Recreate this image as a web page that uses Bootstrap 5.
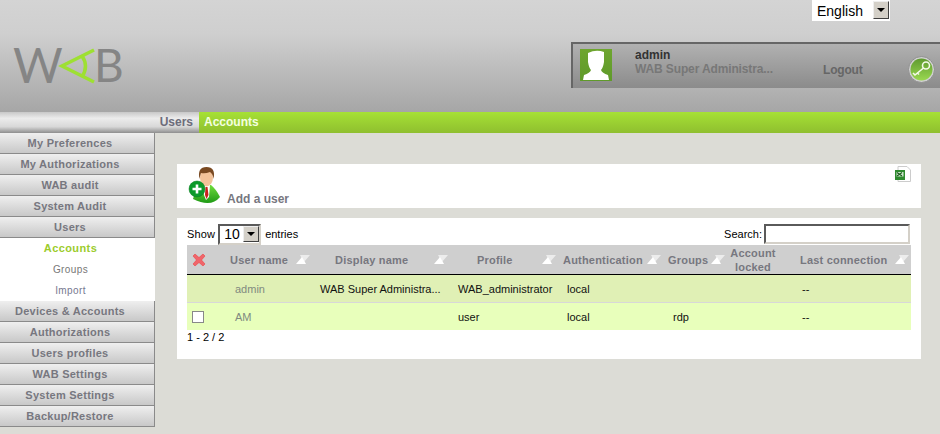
<!DOCTYPE html>
<html lang="en">
<head>
<meta charset="utf-8">
<title>WAB - Accounts</title>
<link href="https://cdn.jsdelivr.net/npm/bootstrap@5.3.0/dist/css/bootstrap.min.css" rel="stylesheet">
<style>
html,body{height:434px;overflow:hidden}
body{background:#dcdcd6;font-family:"Liberation Sans",Arial,sans-serif;font-size:11px;line-height:13px;color:#000}
.wab-head{height:112px;background:linear-gradient(#d4d4d4 0,#cfcfcf 30%,#a6a6a6 100%)}
.wab-lang{right:50px;top:0;width:78px;height:21px;border:1px solid #fff;border-top:0;background:#fff;padding:1px 0 0 1px}
.wab-lang select{appearance:none;border:0;background:#fff;font:14px/18px "Liberation Sans",sans-serif;padding:1px 0 0 3px;width:60px;height:19px;color:#000}
.wab-arrow{width:16px;height:16px;background:#d4d0c8;border:1px solid;border-color:#eee #404040 #404040 #eee;flex:none}
.wab-lang .wab-arrow{height:18px}
.wab-logo{left:14px;top:40px;height:50px;width:112px}
.wab-letter{font-family:"Lato",sans-serif;font-weight:400;font-size:48px;line-height:50px;color:#858585;top:0}
.wab-letter-w{left:-1px}
.wab-letter-b{left:80px;font-size:46px}
.wab-user{left:571px;top:42px;right:0;height:46px;border-top:2px solid #666;border-left:2px solid #666;background:linear-gradient(#b1b1b1,#8b8b8b);font-size:12px;font-weight:700}
.wab-name{left:62px;top:5px;color:#333}
.wab-role{left:62px;top:19px;color:#777;letter-spacing:-.13px}
.wab-logout{left:250px;top:20px;color:#666;letter-spacing:-.2px}
.wab-avatar{left:7px;top:5px}
.wab-key{left:335px;top:12px}
.wab-crumb{height:21px;font-size:12px;font-weight:700;line-height:20px}
.wab-crumb-a{width:199px;background:linear-gradient(#c8c8c8 0,#ececec 30%,#d8d8d8 70%,#8e8e8e 100%);color:#6c6c7a;padding-right:6px}
.wab-crumb-b{background:linear-gradient(#a6e135,#8fbf2f);color:#f4ffe0;padding-left:5px}
.wab-side{width:155px;flex:none}
.wab-side a{display:block;height:21px;line-height:20px;padding-right:14px;text-align:center;text-decoration:none;font-size:11px;font-weight:700;letter-spacing:.25px;color:#77777f;background:linear-gradient(#efefef,#c8c8c8);border-right:1px solid #8a8a8a;border-bottom:1px solid #8a8a8a}
.wab-side a.wab-sub{background:#fff;border:0;font-size:10px;font-weight:400;letter-spacing:.4px;line-height:22px;color:#777}
.wab-side a.wab-cur{color:#9ccc2c;font-weight:700;font-size:11px;line-height:20px;letter-spacing:.4px}
.wab-side a.wab-imp{color:#77778f}
.wab-main{padding:31px 19px 0 22px}
.wab-panel{background:#fff}
.wab-add{height:44px;margin-bottom:10px}
.wab-addicon{left:11px;top:3px}
.wab-addlabel{left:50px;top:29px;font-size:12px;font-weight:700;color:#777780}
.wab-xls{right:10px;top:2px}
.wab-list{height:141px;padding:5px 10px 0}
.wab-tools{height:22px;align-items:center}
.wab-inset{border:2px solid;border-color:#5a5a5a #d4d0c8 #d4d0c8 #5a5a5a;background:#fff}
.wab-size{width:43px;height:21px;margin:0 4px 0 3px;font-size:14px;padding:0 0 0 4px;line-height:16px}
.wab-size .wab-arrow{margin-left:auto}
.wab-search{width:146px;height:20px;margin:0 1px 0 2px;border-radius:0;padding:0}
.wab-show{letter-spacing:.15px}
.wab-grid{width:724px;table-layout:fixed;margin:0;border-collapse:separate;border-spacing:0;font-size:11px}
.wab-grid th{height:30px;background:#cfcfcf;border-bottom:1px solid #000;padding:0;font-weight:700;letter-spacing:.2px;color:#77777f;text-align:center;line-height:14px;vertical-align:middle;white-space:nowrap;position:relative}
.wab-grid td{padding:2px 0 0;vertical-align:middle;color:#111;border:0;white-space:nowrap}
.wab-r1 td{height:28px;background:#e0f0b5;border-bottom:1px solid #d8d8d8}
.wab-r2 td{height:27px;background:#e8ffbb}
.wab-grid .wab-login{color:#808a80;padding-left:13px}
.wab-grid td.wab-nopad{padding:0}
.wab-sort{position:absolute;right:2px;top:10px}
.wab-grid td.wab-pad{padding-left:8px}
.wab-grid td.wab-pad2{padding-left:9px}
.wab-grid td.wab-pad3{padding-left:10px}
.wab-check{display:block;width:12px;height:12px;margin-left:5px;background:#fff;border:1px solid;border-color:#404040 #fff #fff #404040;outline:1px solid #888;outline-offset:-1px}
.wab-count{line-height:14px}
</style>
</head>
<body>
<svg width="0" height="0" class="position-absolute"><defs>
<symbol id="wab-s" viewBox="0 0 14 9"><path d="M4 0H14L8 7Z" fill="#ececec"/><path d="M0 9 6 2 10 9Z" fill="#fff"/></symbol>
<linearGradient id="g1" x1="0" x2="0" y1="0" y2="1"><stop offset="0" stop-color="#6ea52f"/><stop offset="1" stop-color="#5f9a2a"/></linearGradient>
<linearGradient id="g2" x1="0" x2="0" y1="0" y2="1"><stop offset="0" stop-color="#6fdc3c"/><stop offset="1" stop-color="#1f9a15"/></linearGradient>
<linearGradient id="g3" x1="0" x2="0" y1="0" y2="1"><stop offset="0" stop-color="#5f9a30"/><stop offset="1" stop-color="#9ad850"/></linearGradient>
</defs></svg>
<header class="wab-head position-relative">
  <div class="wab-lang position-absolute d-flex">
    <select aria-label="Language"><option>English</option></select>
    <span class="wab-arrow d-flex align-items-center justify-content-center"><svg width="8" height="4"><path d="M0 0H8L4 4Z" fill="#000"/></svg></span>
  </div>
  <div class="wab-logo position-absolute">
    <span class="wab-letter wab-letter-w position-absolute">W</span>
    <svg class="position-absolute start-0 top-0" width="112" height="50"><g fill="none" stroke="#9ee032"><path stroke-width="3.500" d="M80 10 48 26 80 42"/><path stroke-width="3.500" d="M68 16Q75 26 68 37"/></g></svg>
    <span class="wab-letter wab-letter-b position-absolute">B</span>
  </div>
  <div class="wab-user position-absolute">
    <svg class="wab-avatar position-absolute" width="32" height="32" viewBox="0 0 32 32"><rect width="32" height="32" fill="url(#g1)"/><path d="M8 4Q16 0 24 3L24 13Q23 19 21 21Q22 24 28 26L29 31H3L4 26Q10 24 11 21Q9 19 8 13Z" fill="#fff"/></svg>
    <div class="wab-name position-absolute">admin</div>
    <div class="wab-role position-absolute">WAB Super Administra...</div>
    <div class="wab-logout position-absolute">Logout</div>
    <svg class="wab-key position-absolute" width="27" height="27" viewBox="0 0 27 27"><circle cx="13.500" cy="13.500" r="13" fill="#d0d0d0" stroke="#8f8f8f"/><circle cx="13.500" cy="13.500" r="11" fill="url(#g3)"/><g fill="none" stroke="#f4fae8" stroke-width="1.600"><circle cx="18" cy="9.500" r="3.500"/><path d="M15.500 12 7 19 5 17M9.500 17 11 18.500"/></g></svg>
  </div>
</header>
<div class="wab-crumb d-flex">
  <div class="wab-crumb-a text-end">Users</div>
  <div class="wab-crumb-b flex-grow-1">Accounts</div>
</div>
<div class="d-flex">
  <nav class="wab-side">
    <a href="#">My Preferences</a>
    <a href="#">My Authorizations</a>
    <a href="#">WAB audit</a>
    <a href="#">System Audit</a>
    <a href="#">Users</a>
    <a href="#" class="wab-sub wab-cur">Accounts</a>
    <a href="#" class="wab-sub">Groups</a>
    <a href="#" class="wab-sub wab-imp">Import</a>
    <a href="#">Devices &amp; Accounts</a>
    <a href="#">Authorizations</a>
    <a href="#">Users profiles</a>
    <a href="#">WAB Settings</a>
    <a href="#">System Settings</a>
    <a href="#">Backup/Restore</a>
  </nav>
  <main class="wab-main flex-grow-1">
    <section class="wab-panel wab-add position-relative">
      <svg class="wab-addicon position-absolute" width="33" height="38" viewBox="0 0 33 38"><path d="M5 32Q8 21 14 18L23 18Q28 22 32 30Q23 41 5 32Z" fill="url(#g2)"/><path d="M15 18h7l-1 12-3 3-2-5Z" fill="#fff"/><path d="M17.500 20h2l1 8-2 4-1.500-4Z" fill="#c8201c"/><ellipse cx="18.500" cy="10.500" rx="6.500" ry="9" fill="#f3c39a"/><path d="M11.500 12Q9 0 18.500 0Q28 0 25.500 12Q25 7 22 5Q17 7 13 6Q12 9 11.500 12Z" fill="#7a4a22"/><circle cx="9" cy="22" r="8" fill="#0c9a2a" stroke="#0a7f20" stroke-width=".5"/><path d="M7.700 17.500h2.600v3.200h3.200v2.600h-3.200v3.200H7.700v-3.200H4.500v-2.600h3.200Z" fill="#fff"/></svg>
      <span class="wab-addlabel position-absolute">Add a user</span>
      <svg class="wab-xls position-absolute" width="16" height="16" viewBox="0 0 16 16"><path d="M3 .5H12L15.500 4V15.500H3Z" fill="#fff" stroke="#ccc"/><rect y="4" width="10" height="10" fill="#2f8a2f"/><path d="M1.500 6h7v4.500h-7Z" fill="#cfe8cf"/><path d="M2 6.500l5 3.500M7 6.500l-5 3.500" stroke="#1c5c1c" stroke-width="1.200"/></svg>
    </section>
    <section class="wab-panel wab-list">
      <div class="wab-tools d-flex">
        <span class="wab-show">Show</span>
        <span class="wab-inset wab-size d-flex align-items-center">10<span class="wab-arrow d-flex align-items-center justify-content-center"><svg width="8" height="4"><path d="M0 0H8L4 4Z" fill="#000"/></svg></span></span>
        <span>entries</span>
        <label class="ms-auto" for="wab-q">Search:</label>
        <input id="wab-q" class="wab-inset wab-search" type="text">
      </div>
      <table class="wab-grid">
        <colgroup><col style="width:35px"><col style="width:90px"><col style="width:138px"><col style="width:108px"><col style="width:105px"><col style="width:64px"><col style="width:66px"><col style="width:118px"></colgroup>
        <thead><tr>
          <th><svg class="d-block ms-1" width="16" height="16" viewBox="0 0 16 16"><path d="M2 4 4 2 8 5.500 12 2 14 4 10.500 8 14 12 12 14 8 10.500 4 14 2 12 5.500 8Z" fill="#f0656a" stroke="#e33" stroke-width=".5"/></svg></th>
          <th><span class="d-block text-start" style="padding-left:8px">User name</span><svg class="wab-sort" width="14" height="9"><use href="#wab-s"/></svg></th>
          <th><span class="d-block text-start" style="padding-left:23px">Display name</span><svg class="wab-sort" width="14" height="9"><use href="#wab-s"/></svg></th>
          <th><span class="d-block text-start" style="padding-left:27px">Profile</span><svg class="wab-sort" width="14" height="9"><use href="#wab-s"/></svg></th>
          <th><span class="d-block text-start" style="padding-left:5px">Authentication</span><svg class="wab-sort" width="14" height="9"><use href="#wab-s"/></svg></th>
          <th><span class="d-block text-start" style="padding-left:5px">Groups</span><svg class="wab-sort" width="14" height="9"><use href="#wab-s"/></svg></th>
          <th><span class="d-block" style="padding-right:14px">Account<br>locked</span></th>
          <th><span class="d-block text-start" style="padding-left:7px">Last connection</span><svg class="wab-sort" width="14" height="9"><use href="#wab-s"/></svg></th>
        </tr></thead>
        <tbody>
          <tr class="wab-r1"><td></td><td class="wab-login">admin</td><td class="wab-pad">WAB Super Administra...</td><td class="wab-pad">WAB_administrator</td><td class="wab-pad2">local</td><td></td><td></td><td class="wab-pad2">--</td></tr>
          <tr class="wab-r2"><td class="wab-nopad"><span class="wab-check"></span></td><td class="wab-login">AM</td><td></td><td class="wab-pad">user</td><td class="wab-pad2">local</td><td class="wab-pad3">rdp</td><td></td><td class="wab-pad2">--</td></tr>
        </tbody>
      </table>
      <div class="wab-count">1 - 2 / 2</div>
    </section>
  </main>
</div>
</body>
</html>
